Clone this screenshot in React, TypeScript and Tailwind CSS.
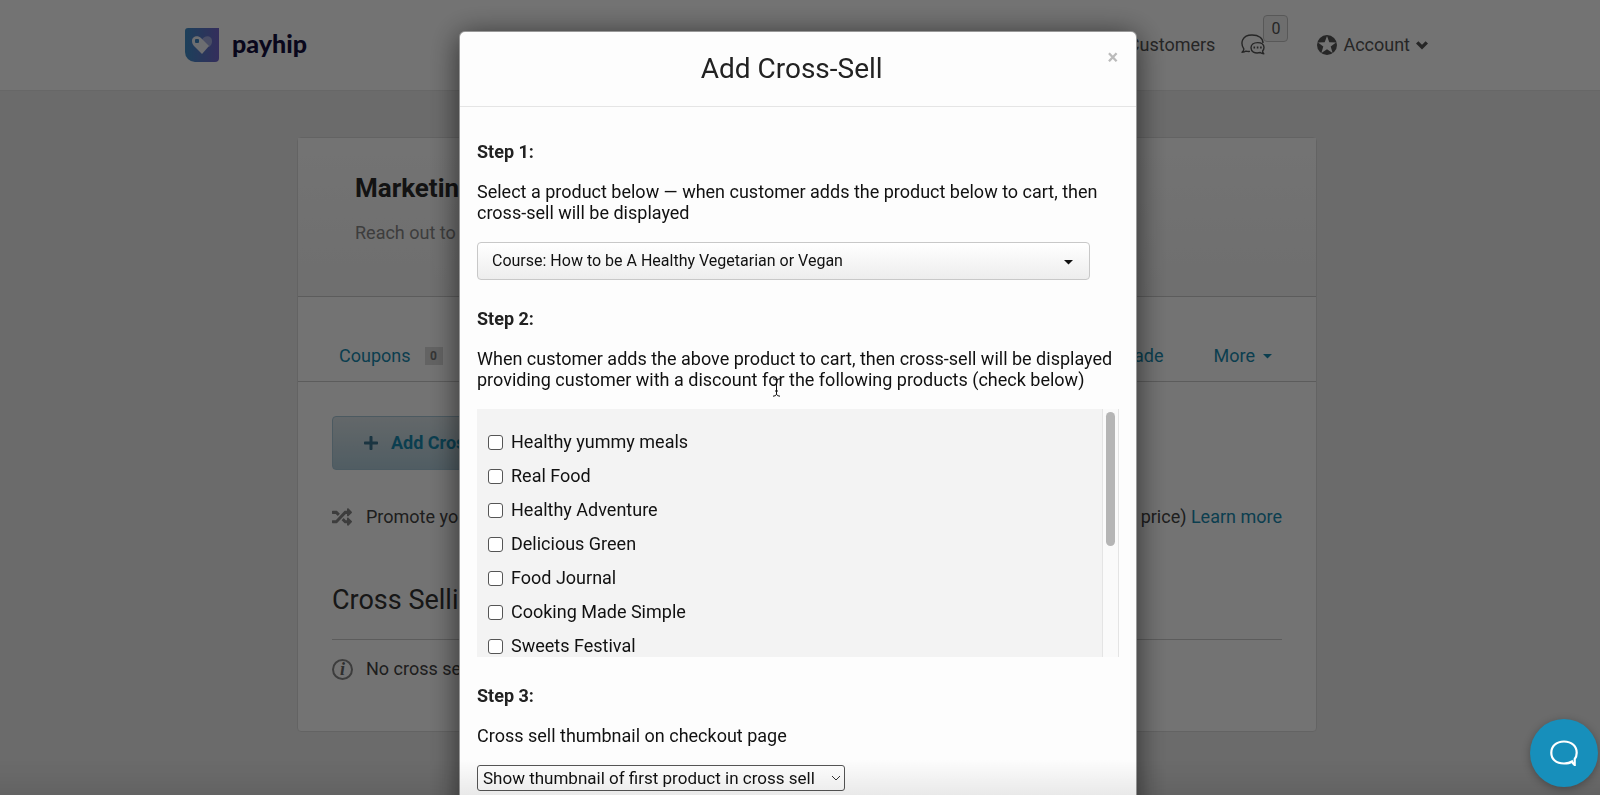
import { useState } from 'react'
import { FaPlus, FaRandom } from 'react-icons/fa'

const products = [
  'Healthy yummy meals',
  'Real Food',
  'Healthy Adventure',
  'Delicious Green',
  'Food Journal',
  'Cooking Made Simple',
  'Sweets Festival',
]

function Logo() {
  return (
    <a href="#" className="flex items-center gap-[13px]">
      <svg width="34" height="34" viewBox="0 0 34 34" aria-hidden="true">
        <defs>
          <linearGradient id="logo" x1="0" y1="0" x2="1" y2="0">
            <stop offset="0" stopColor="#3f8fc8" />
            <stop offset="1" stopColor="#7466cc" />
          </linearGradient>
        </defs>
        <path d="M3 0h31v30a4 4 0 0 1-4 4H10A10 10 0 0 1 0 24V3a3 3 0 0 1 3-3z" fill="url(#logo)" />
        <path d="M17 12c2-5 10-5 10 1 0 3-1 4-3 6z" fill="#a3ace0" />
        <path d="M7 13c0-5 6-6 9-3l8 8-7 8-8-8c-1-1-2-3-2-5z" fill="#f2f4fa" />
        <rect x="10" y="11" width="4" height="4" rx="1" fill="#3f86c4" />
      </svg>
      <span className="pb-1 font-[Lato] text-[25px] leading-8 font-black text-[#14103f]">payhip</span>
    </a>
  )
}

function ChatsIcon() {
  return (
    <svg width="24" height="22" viewBox="0 0 24 22" fill="none" stroke="#555" strokeWidth="1.4" strokeLinejoin="round" aria-hidden="true">
      <path d="M9 17.4c-1.500.3-2.500.2-4-.3-1 .9-2 1.200-4 1.200 1.300-1 1.900-2.200 1.800-3.400C-1 9 1 1 11 1c7 0 11 3.500 11 8" />
      <path d="M16.500 8.600c4 0 6.500 2 6.500 5 0 1.400-.6 2.500-1.400 3.300 0 1 .3 2 1.200 2.800-1.400 0-2.600-.4-3.500-1.200-6 1.500-9.300-1.200-9.300-4.700 0-3 2.500-5.200 6.500-5.200z" />
      <path d="M12.500 13.500h1.600m1.700 0h1.600m1.700 0h1.600" strokeWidth="2" />
    </svg>
  )
}

function StarIcon() {
  return (
    <svg width="20" height="20" viewBox="0 0 20 20" aria-hidden="true">
      <circle cx="10" cy="10" r="10" fill="#555" />
      <path d="M10 1l2.300 6.300 6.700.2-5.300 4.100 1.900 6.400-5.600-3.700L4.400 18l1.900-6.400L1 7.500l6.700-.2z" fill="#fff" />
    </svg>
  )
}

function Caret({ className }: { className?: string }) {
  return (
    <svg width="9" height="5" viewBox="0 0 9 5" className={className} aria-hidden="true">
      <path d="M0 0h9L4.500 4.500z" fill="currentColor" />
    </svg>
  )
}

function Header() {
  return (
    <header className="flex h-[91px] items-center justify-between border-b border-[#e4e4e4] bg-white pr-[172px] pl-[185px]">
      <Logo />
      <nav className="flex items-center text-lg text-[#555]">
        <a href="#">Customers</a>
        <a href="#" className="relative ml-[26px]" aria-label="Messages">
          <ChatsIcon />
          <span className="absolute bottom-[14px] left-[22px] flex h-[27px] w-[25px] items-center justify-center rounded-sm border border-[#c4c4c4] bg-[#f4f4f4] text-base">
            0
          </span>
        </a>
        <a href="#" className="ml-[52px] flex items-center gap-[6px]">
          <StarIcon />
          Account
          <svg width="12" height="9" viewBox="0 0 12 9" fill="none" stroke="currentColor" strokeWidth="3.400" aria-hidden="true">
            <path d="M1.200 1.400L6 6.200l4.800-4.800" />
          </svg>
        </a>
      </nav>
    </header>
  )
}

function MarketingPage() {
  return (
    <main className="mx-auto mt-[46px] w-[1020px] translate-x-[7px] rounded-sm border border-[#dcdcdc] bg-white">
      <div className="h-[159px] border-b border-[#ccc] bg-gradient-to-b from-white to-[#f5f5f5] px-[57px] pt-8">
        <h1 className="text-[26px] leading-9 font-bold text-[#2b2b2b]">Marketing</h1>
        <p className="mt-[15px] text-lg leading-6 text-[#888]">Reach out to your customers</p>
      </div>

      <div className="flex h-[85px] items-end justify-between border-b border-[#ccc] pr-11 pb-[11px] pl-[41px] text-lg text-[#1a8bb0]">
        <a href="#" className="flex items-center gap-[14px]">
          Coupons
          <span className="flex h-[18px] w-[18px] items-center justify-center bg-[#dcdcdc] text-xs font-bold text-[#777]">0</span>
        </a>
        <div className="flex gap-[50px]">
          <a href="#">Trade</a>
          <a href="#" className="flex items-center gap-2">
            More
            <Caret />
          </a>
        </div>
      </div>

      <div className="px-[34px] pt-[34px] pb-[50px]">
        <button
          type="button"
          className="flex h-[54px] items-center gap-3 rounded border border-[#a8c8d8] bg-gradient-to-b from-[#dce6ea] to-[#b2cedb] px-[30px] text-lg font-bold text-[#1a8bb0]"
        >
          <FaPlus size={16} className="text-[#3c7590]" />
          Add Cross-Sell
        </button>
        <div className="mt-[35px] flex items-center text-lg leading-6 text-[#444]">
          <FaRandom size={20} className="mr-[14px] text-[#888]" />
          <p className="flex flex-1 justify-between">
            <span>Promote your</span>
            <span>
              price) <a href="#" className="text-[#1a8bb0]">Learn more</a>
            </span>
          </p>
        </div>
        <h2 className="mt-[53px] border-b border-[#ccc] pb-[21px] text-[27px] leading-9 text-[#333]">Cross Selling</h2>
        <div className="mt-[17px] flex items-center text-lg leading-6 text-[#444]">
          <span className="mr-[13px] flex h-[21px] w-[21px] items-center justify-center rounded-full border-2 border-[#888] font-['Liberation_Serif',serif] text-lg font-bold text-[#666] italic">
            i
          </span>
          No cross sells yet
        </div>
      </div>
    </main>
  )
}

function CrossSellModal() {
  const [checked, setChecked] = useState<string[]>([])

  const toggle = (name: string) => {
    setChecked(checked.includes(name) ? checked.filter((n) => n !== name) : [...checked, name])
  }

  return (
    <div className="fixed inset-0 overflow-hidden bg-black/55 pt-[31px] pr-1">
      <div
        role="dialog"
        aria-label="Add Cross-Sell"
        className="relative mx-auto h-[900px] w-[678px] rounded-md border border-black/40 bg-[#fdfdfd] text-lg leading-[21px] text-[#111] shadow-[0_4px_30px_rgba(0,0,0,0.6)]"
      >
        <div className="flex h-[75px] items-start border-b border-[#e5e5e5] pr-[18px]">
          <h2 className="flex-1 pt-[19px] pl-4 text-center text-[28px] leading-9 text-[#222]">Add Cross-Sell</h2>
          <button type="button" aria-label="Close" className="mt-[13px] text-xl leading-6 font-bold text-[#bbb]">
            ×
          </button>
        </div>

        <div className="px-[17px] pt-[34px]">
          <h3 className="font-bold text-[#222]">Step 1:</h3>
          <p className="mt-[19px]">
            Select a product below — when customer adds the product below to cart, then
            <br />
            cross-sell will be displayed
          </p>
          <div className="relative mt-[19px] w-[613px]">
            <select
              aria-label="Product"
              className="block h-[38px] w-full appearance-none rounded-sm border border-[#c8c8c8] bg-gradient-to-b from-white to-[#ededed] px-[14px] text-base"
            >
              <option>Course: How to be A Healthy Vegetarian or Vegan</option>
            </select>
            <Caret className="pointer-events-none absolute top-[18px] right-[17px]" />
          </div>

          <h3 className="mt-[28px] font-bold text-[#222]">Step 2:</h3>
          <p className="mt-[19px]">
            When customer adds the above product to cart, then cross-sell will be displayed
            <br />
            providing customer with a discount for the following products (check below)
          </p>
          <div className="mt-[19px] flex h-[248px] overflow-hidden bg-[#f3f3f3]">
            <ul className="flex-1 pt-[15px] pl-[11px]">
              {products.map((name) => (
                <li key={name} className="h-[34px]">
                  <label className="flex h-[34px] items-center gap-2">
                    <input
                      type="checkbox"
                      checked={checked.includes(name)}
                      onChange={() => toggle(name)}
                      className="mt-[2px] h-[15px] w-[15px] appearance-none rounded-[3px] border border-[#555] bg-white checked:bg-[#1a8bb0]"
                    />
                    {name}
                  </label>
                </li>
              ))}
            </ul>
            <div className="w-[17px] border-x border-[#e4e4e4] bg-[#fafafa] px-[3px] pt-[3px]">
              <div className="h-[134px] w-[9px] rounded-full bg-[#b5b5b5]" />
            </div>
          </div>

          <h3 className="mt-[28px] font-bold text-[#222]">Step 3:</h3>
          <p className="mt-[19px]">
            <label htmlFor="thumbnail">Cross sell thumbnail on checkout page</label>
          </p>
          <div className="relative mt-[19px] w-[368px]">
            <select
              id="thumbnail"
              className="block h-[26px] w-full appearance-none rounded-[3px] border border-[#555] bg-white pl-[5px] text-[17px]"
            >
              <option>Show thumbnail of first product in cross sell</option>
            </select>
            <svg
              width="10"
              height="6"
              viewBox="0 0 10 6"
              fill="none"
              stroke="#333"
              className="pointer-events-none absolute top-[10px] right-1"
              aria-hidden="true"
            >
              <path d="M1 1l4 4 4-4" />
            </svg>
          </div>
        </div>

        {/* text cursor */}
        <svg width="9" height="19" viewBox="0 0 9 19" fill="none" stroke="#111" className="absolute top-[346px] left-[312px]" aria-hidden="true">
          <path d="M1 .8q3 0 3.500 2 .5-2 3.500-2M4.500 2.500v14M1 18.200q3 0 3.500-2 .5 2 3.500 2M3 13h3" />
        </svg>
      </div>
      <div className="pointer-events-none absolute inset-x-0 bottom-0 h-9 bg-gradient-to-b from-transparent to-black/8" />
    </div>
  )
}

export default function App() {
  return (
    <div className="h-screen overflow-hidden bg-[#eee] font-[Roboto,sans-serif]">
      <Header />
      <MarketingPage />
      <CrossSellModal />
      <button
        type="button"
        aria-label="Open chat"
        className="fixed right-[2px] bottom-2 flex h-[68px] w-[68px] items-center justify-center rounded-full bg-[#178fbb] shadow-[0_2px_8px_rgba(0,0,0,0.3)]"
      >
        <svg width="28" height="26" viewBox="0 0 28 26" fill="none" stroke="#fff" strokeWidth="2.200" aria-hidden="true">
          <path d="M22 21.500c-2 1.500-4.500 2-8 2C6 23.500 1.300 19 1.300 12.700S6 1.500 14 1.500s12.700 5 12.700 11.200c0 3-1 5-2 6.300V25c-1.500-1-2.200-2-2.700-3.500z" />
        </svg>
      </button>
    </div>
  )
}
